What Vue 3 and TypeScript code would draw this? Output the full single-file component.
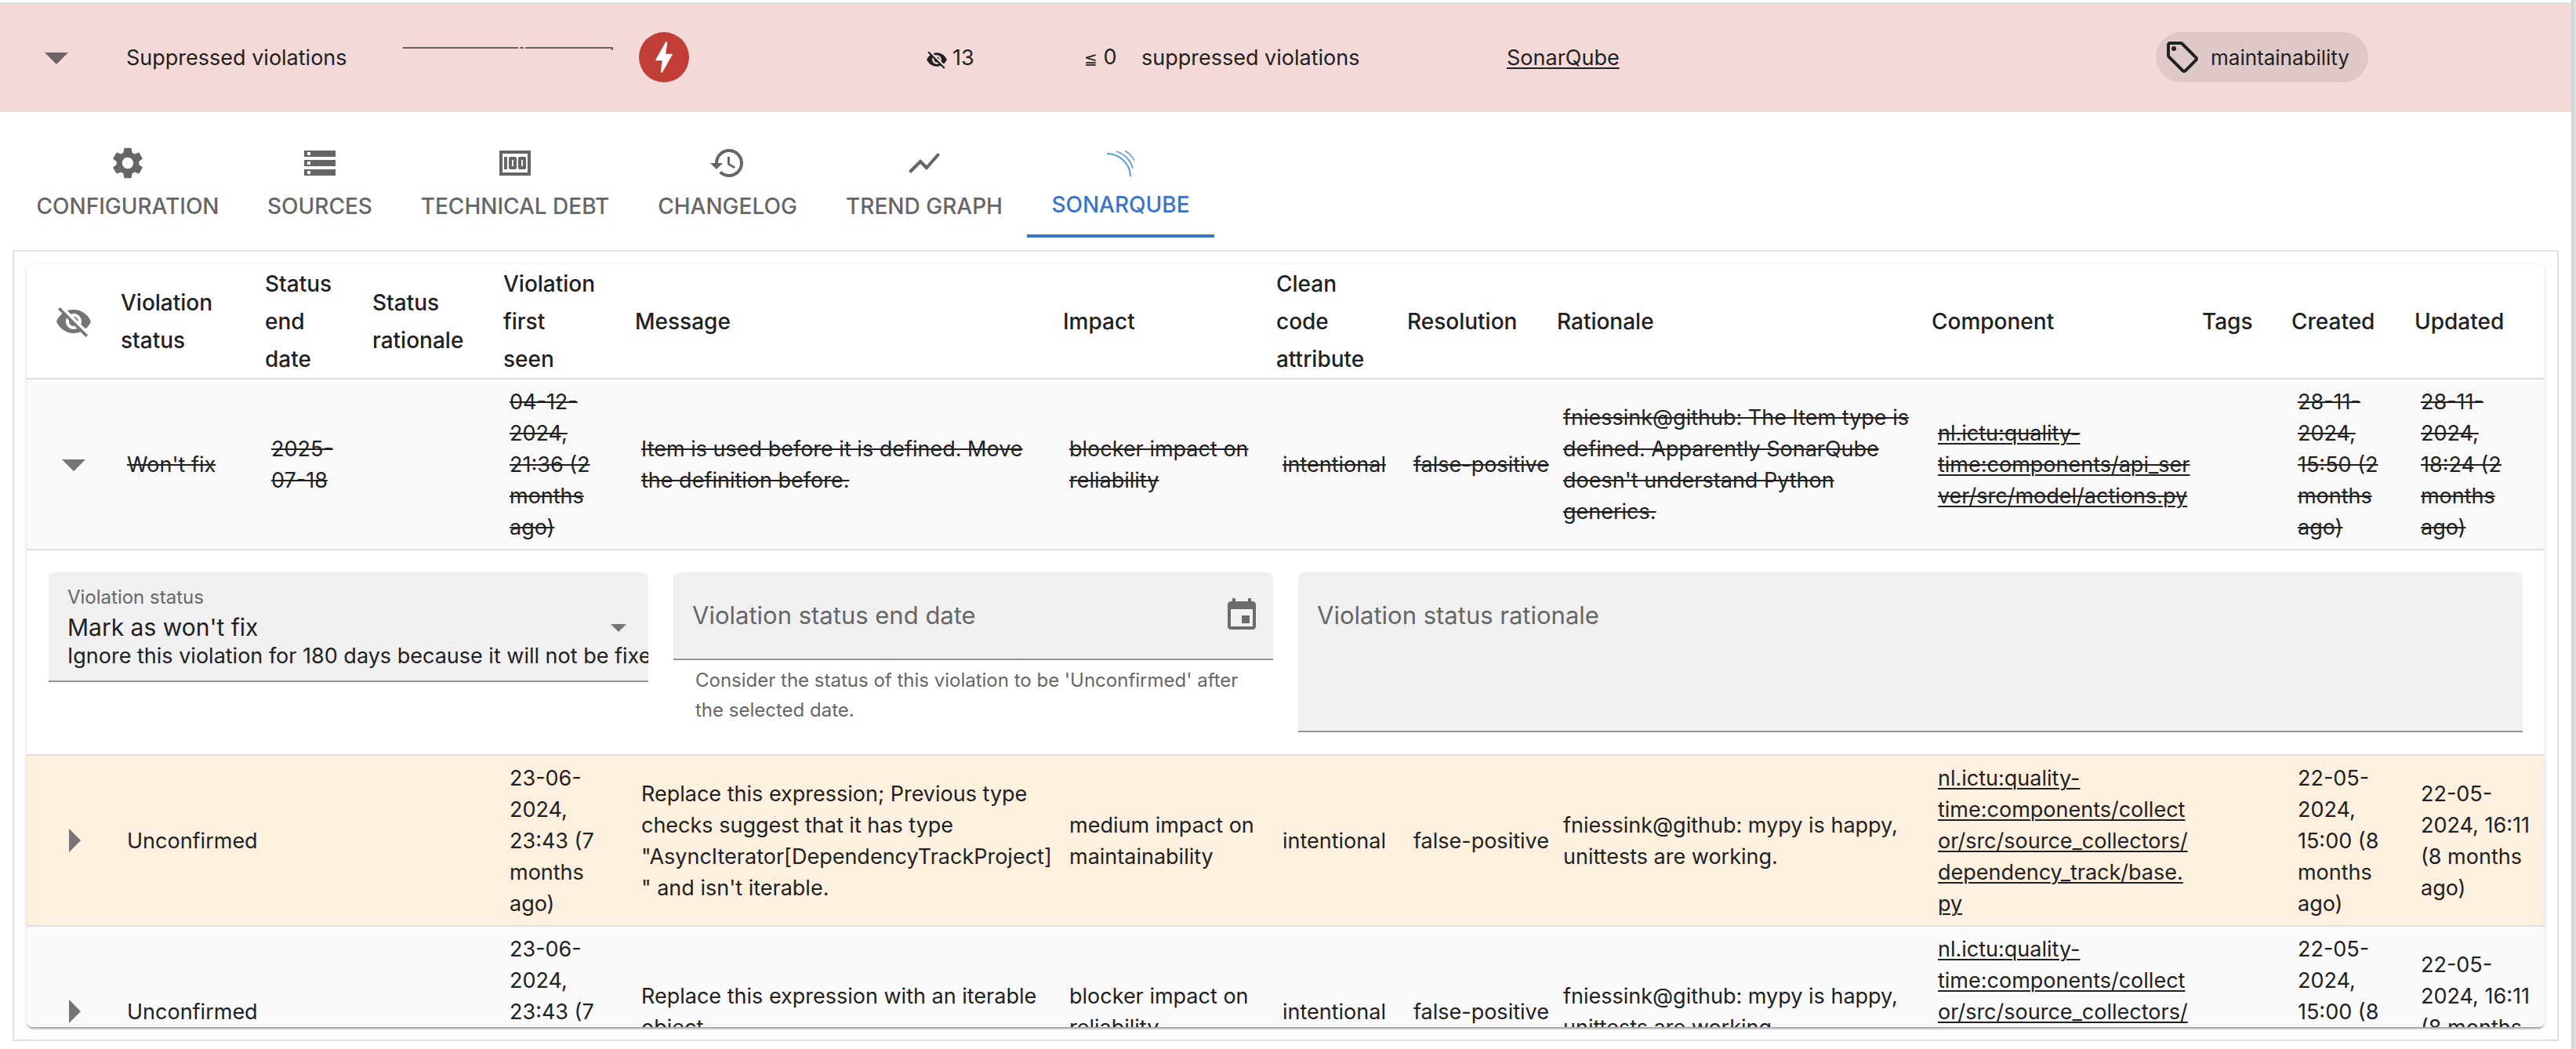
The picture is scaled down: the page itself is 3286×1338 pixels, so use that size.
<script setup lang="ts">
import { ref } from 'vue'

interface Tab {
  label: string
  width: number
  paths: string[]
}

interface Column {
  title: string
  weight: number
}

interface Violation {
  status: string
  endDate: string
  firstSeen: string
  message: string
  impact: string
  attribute: string
  resolution: string
  rationale: string
  component: string
  created: string
  updated: string
  ignored: boolean
  color: string
  expanded: boolean
}

const eyeOff =
  'M12 7c2.76 0 5 2.24 5 5 0 .65-.13 1.26-.36 1.83l2.92 2.92c1.51-1.26 2.7-2.89 3.43-4.75-1.73-4.39-6-7.5-11-7.5-1.4 0-2.74.25-3.98.7l2.16 2.16C10.74 7.13 11.35 7 12 7M2 4.27l2.28 2.28.46.46C3.08 8.3 1.78 10.02 1 12c1.73 4.39 6 7.5 11 7.5 1.55 0 3.03-.3 4.38-.84l.42.42L19.73 22 21 20.73 3.27 3zM7.53 9.8l1.55 1.55c-.05.21-.08.43-.08.65 0 1.66 1.34 3 3 3 .22 0 .44-.03.65-.08l1.55 1.55c-.67.33-1.41.53-2.2.53-2.76 0-5-2.24-5-5 0-.79.2-1.53.53-2.2m4.31-.78 3.15 3.15.02-.16c0-1.66-1.34-3-3-3z'

const activeTab = ref('Sonarqube')

const tabs: Tab[] = [
  {
    label: 'Configuration',
    width: 294,
    paths: [
      'M19.14 12.94c.04-.3.06-.61.06-.94 0-.32-.02-.64-.07-.94l2.03-1.58c.18-.14.23-.41.12-.61l-1.92-3.32c-.12-.22-.37-.29-.59-.22l-2.39.96c-.5-.38-1.03-.7-1.62-.94l-.36-2.54c-.04-.24-.24-.41-.48-.41h-3.84c-.24 0-.43.17-.47.41l-.36 2.54c-.59.24-1.13.57-1.62.94l-2.39-.96c-.22-.08-.47 0-.59.22L2.74 8.87c-.12.21-.08.47.12.61l2.03 1.58c-.05.3-.09.63-.09.94s.02.64.07.94l-2.03 1.58c-.18.14-.23.41-.12.61l1.92 3.32c.12.22.37.29.59.22l2.39-.96c.5.38 1.03.7 1.62.94l.36 2.54c.05.24.24.41.48.41h3.84c.24 0 .44-.17.47-.41l.36-2.54c.59-.24 1.13-.56 1.62-.94l2.39.96c.22.08.47 0 .59-.22l1.92-3.32c.12-.22.07-.47-.12-.61zM12 15.6c-1.98 0-3.6-1.62-3.6-3.6s1.62-3.6 3.6-3.6 3.6 1.62 3.6 3.6-1.62 3.6-3.6 3.6',
    ],
  },
  {
    label: 'Sources',
    width: 196,
    paths: ['M2 20h20v-4H2zm2-3h2v2H4zM2 4v4h20V4zm4 3H4V5h2zm-4 7h20v-4H2zm2-3h2v2H4z'],
  },
  {
    label: 'Technical debt',
    width: 302,
    paths: [
      'M5 8h2v8H5zm7 0H9c-.55 0-1 .45-1 1v6c0 .55.45 1 1 1h3c.55 0 1-.45 1-1V9c0-.55-.45-1-1-1m-1 6h-1v-4h1zm7-6h-3c-.55 0-1 .45-1 1v6c0 .55.45 1 1 1h3c.55 0 1-.45 1-1V9c0-.55-.45-1-1-1m-1 6h-1v-4h1z',
      'M2 4v16h20V4zm2 14V6h16v12z',
    ],
  },
  {
    label: 'Changelog',
    width: 240,
    paths: [
      'M13 3c-4.97 0-9 4.03-9 9H1l3.89 3.89.07.14L9 12H6c0-3.87 3.13-7 7-7s7 3.13 7 7-3.13 7-7 7c-1.93 0-3.68-.79-4.94-2.06l-1.42 1.42C8.27 19.99 10.51 21 13 21c4.97 0 9-4.03 9-9s-4.03-9-9-9m-1 5v5l4.28 2.54.72-1.21-3.5-2.08V8z',
    ],
  },
  {
    label: 'Trend graph',
    width: 262,
    paths: ['m3.5 18.49 6-6.01 4 4L22 6.92l-1.41-1.41-7.09 7.97-4-4L2 16.99z'],
  },
  { label: 'Sonarqube', width: 239, paths: [] },
]

const columns: Column[] = [
  { title: '', weight: 120 },
  { title: 'Violation\nstatus', weight: 184 },
  { title: 'Status\nend\ndate', weight: 137 },
  { title: 'Status\nrationale', weight: 167 },
  { title: 'Violation\nfirst\nseen', weight: 168 },
  { title: 'Message', weight: 546 },
  { title: 'Impact', weight: 272 },
  { title: 'Clean\ncode\nattribute', weight: 167 },
  { title: 'Resolution', weight: 191 },
  { title: 'Rationale', weight: 478 },
  { title: 'Component', weight: 345 },
  { title: 'Tags', weight: 114 },
  { title: 'Created', weight: 157 },
  { title: 'Updated', weight: 166 },
]
const totalWeight = columns.reduce((sum, column) => sum + column.weight, 0)
const columnWidth = (column: Column) => `${(column.weight / totalWeight) * 100}%`

const violations = ref<Violation[]>([
  {
    status: "Won't fix",
    endDate: '2025-\n07-18',
    firstSeen: '04-12-\n2024,\n21:36 (2\nmonths\nago)',
    message: 'Item is used before it is defined. Move\nthe definition before.',
    impact: 'blocker impact on\nreliability',
    attribute: 'intentional',
    resolution: 'false-positive',
    rationale:
      "fniessink@github: The Item type is\ndefined. Apparently SonarQube\ndoesn't understand Python\ngenerics.",
    component: 'nl.ictu:quality-\ntime:components/api_ser\nver/src/model/actions.py',
    created: '28-11-\n2024,\n15:50 (2\nmonths\nago)',
    updated: '28-11-\n2024,\n18:24 (2\nmonths\nago)',
    ignored: true,
    color: 'grey',
    expanded: true,
  },
  {
    status: 'Unconfirmed',
    endDate: '',
    firstSeen: '23-06-\n2024,\n23:43 (7\nmonths\nago)',
    message:
      'Replace this expression; Previous type\nchecks suggest that it has type\n"AsyncIterator[DependencyTrackProject]\n" and isn\'t iterable.',
    impact: 'medium impact on\nmaintainability',
    attribute: 'intentional',
    resolution: 'false-positive',
    rationale: 'fniessink@github: mypy is happy,\nunittests are working.',
    component:
      'nl.ictu:quality-\ntime:components/collect\nor/src/source_collectors/\ndependency_track/base.\npy',
    created: '22-05-\n2024,\n15:00 (8\nmonths\nago)',
    updated: '22-05-\n2024, 16:11\n(8 months\nago)',
    ignored: false,
    color: 'yellow',
    expanded: false,
  },
  {
    status: 'Unconfirmed',
    endDate: '',
    firstSeen: '23-06-\n2024,\n23:43 (7\nmonths\nago)',
    message: 'Replace this expression with an iterable\nobject.',
    impact: 'blocker impact on\nreliability',
    attribute: 'intentional',
    resolution: 'false-positive',
    rationale: 'fniessink@github: mypy is happy,\nunittests are working.',
    component:
      'nl.ictu:quality-\ntime:components/collect\nor/src/source_collectors/\ndependency_track/base.\npy',
    created: '22-05-\n2024,\n15:00 (8\nmonths\nago)',
    updated: '22-05-\n2024, 16:11\n(8 months\nago)',
    ignored: false,
    color: 'grey',
    expanded: false,
  },
])
</script>

<template>
  <div class="page">
    <main class="content">
      <section class="metric">
        <button class="expander metric-expander" type="button" aria-label="Collapse metric">
          <svg viewBox="0 0 24 24"><path d="M7 10l5 5 5-5z" /></svg>
        </button>
        <span>Suppressed violations</span>
        <svg class="sparkline" viewBox="0 0 268 8" aria-hidden="true">
          <path d="M0 1h147M149 1h5M156 1h112M267 0v4" />
        </svg>
        <span class="status-badge">
          <svg viewBox="0 0 24 24">
            <path
              d="M11 21h-1l1-7H7.500c-.58 0-.57-.32-.38-.66s.05-.08.07-.12C8.480 10.940 10.420 7.540 13 3h1l-1 7h3.500c.49 0 .56.33.47.51l-.07.15C12.960 17.550 11 21 11 21"
            />
          </svg>
        </span>
        <span class="measurement">
          <svg viewBox="0 0 24 24"><path :d="eyeOff" /></svg>
          <span>13</span>
        </span>
        <span class="target"><span class="operator">≦</span> 0</span>
        <span>suppressed violations</span>
        <span><a href="#sonarqube">SonarQube</a></span>
        <span class="chip">
          <svg viewBox="0 0 24 24">
            <path
              d="m21.410 11.580-9-9C12.050 2.220 11.550 2 11 2H4c-1.100 0-2 .9-2 2v7c0 .55.22 1.050.59 1.420l9 9c.36.36.86.58 1.410.58s1.050-.22 1.410-.59l7-7c.37-.36.59-.86.59-1.410s-.23-1.060-.59-1.420M13 20.010 4 11V4h7v-.01l9 9z"
            />
            <circle cx="6.500" cy="6.500" r="1.500" />
          </svg>
          <span>maintainability</span>
        </span>
      </section>

      <nav class="tabs" role="tablist">
        <button
          v-for="tab in tabs"
          :key="tab.label"
          class="tab"
          :class="{ selected: tab.label === activeTab }"
          :style="{ width: tab.width + 'px' }"
          type="button"
          role="tab"
          :aria-selected="tab.label === activeTab"
          @click="activeTab = tab.label"
        >
          <svg v-if="tab.paths.length" class="tab-icon" viewBox="0 0 24 24">
            <path v-for="path in tab.paths" :key="path" :d="path" />
          </svg>
          <svg v-else class="source-logo" viewBox="0 0 44 44">
            <path stroke-width="2" d="M4 10C20 10 34 23 34 39" />
            <path stroke-width="1.700" d="M16 7C26 10 34 18 37 28.500" />
            <path stroke-width="1.400" d="M27 6.500C32 9 36.500 14 39 19" />
          </svg>
          <span>{{ tab.label }}</span>
        </button>
      </nav>

      <section id="sonarqube" class="panel">
        <div class="paper">
          <table>
            <colgroup>
              <col v-for="(column, i) in columns" :key="i" :style="{ width: columnWidth(column) }" />
            </colgroup>
            <thead>
              <tr>
                <th v-for="(column, i) in columns" :key="i" scope="col">
                  <button v-if="i === 0" class="hide-ignored" type="button" aria-label="Hide ignored violations">
                    <svg viewBox="0 0 24 24"><path :d="eyeOff" /></svg>
                  </button>
                  <template v-else>{{ column.title }}</template>
                </th>
              </tr>
            </thead>
            <tbody>
              <template v-for="(item, i) in violations" :key="i">
                <tr :class="[item.color, { ignored: item.ignored }]">
                  <td class="expand-cell">
                    <button
                      class="expander"
                      :class="{ closed: !item.expanded }"
                      type="button"
                      aria-label="Toggle details"
                      @click="item.expanded = !item.expanded"
                    >
                      <svg viewBox="0 0 24 24"><path d="M7 10l5 5 5-5z" /></svg>
                    </button>
                  </td>
                  <td>{{ item.status }}</td>
                  <td>{{ item.endDate }}</td>
                  <td></td>
                  <td>{{ item.firstSeen }}</td>
                  <td>{{ item.message }}</td>
                  <td>{{ item.impact }}</td>
                  <td>{{ item.attribute }}</td>
                  <td>{{ item.resolution }}</td>
                  <td>{{ item.rationale }}</td>
                  <td><a href="#sonarqube">{{ item.component }}</a></td>
                  <td></td>
                  <td>{{ item.created }}</td>
                  <td>{{ item.updated }}</td>
                </tr>
                <tr v-if="item.expanded">
                  <td class="details" colspan="14">
                    <div class="form">
                      <div class="field status-field">
                        <label :for="`status-${i}`">Violation status</label>
                        <select :id="`status-${i}`">
                          <option>Mark as won't fix</option>
                          <option>Unconfirm</option>
                          <option>Confirm</option>
                        </select>
                        <span class="description">Ignore this violation for 180 days because it will not be fixed.</span>
                        <svg class="select-arrow" viewBox="0 0 24 24"><path d="M7 10l5 5 5-5z" /></svg>
                      </div>
                      <div>
                        <div class="field date-field">
                          <label class="floating" :for="`date-${i}`">Violation status end date</label>
                          <input :id="`date-${i}`" type="text" />
                          <button class="calendar" type="button" aria-label="Choose date">
                            <svg viewBox="0 0 24 24">
                              <path
                                d="M17 12h-5v5h5zM16 1v2H8V1H6v2H5c-1.110 0-1.990.9-1.990 2L3 19c0 1.100.89 2 2 2h14c1.100 0 2-.9 2-2V5c0-1.100-.9-2-2-2h-1V1zm3 18H5V8h14z"
                              />
                            </svg>
                          </button>
                        </div>
                        <p class="helper">
                          Consider the status of this violation to be 'Unconfirmed' after<br />the selected date.
                        </p>
                      </div>
                      <div class="field rationale-field">
                        <label class="floating" :for="`rationale-${i}`">Violation status rationale</label>
                        <textarea :id="`rationale-${i}`"></textarea>
                      </div>
                    </div>
                  </td>
                </tr>
              </template>
            </tbody>
          </table>
        </div>
      </section>
    </main>
    <div class="edge"></div>
  </div>
</template>

<style>
body {
  margin: 0;
  background: #fff;
}
</style>

<style scoped>
* {
  box-sizing: border-box;
}

.page {
  display: flex;
  height: 100vh;
  font-family: Inter, 'Liberation Sans', sans-serif;
  font-size: 27px;
  line-height: 40px;
  color: #212121;
}

.content {
  flex: 1;
  min-width: 0;
  display: flex;
  flex-direction: column;
  padding: 3px 0 10px;
}

.edge {
  width: 6px;
  background: linear-gradient(to right, #cfcfcf, #e4e4e4);
}

svg {
  display: block;
  fill: currentColor;
}

a {
  color: inherit;
  text-decoration: underline;
  text-decoration-thickness: 2px;
  text-underline-offset: 3px;
}

button {
  font: inherit;
  color: inherit;
  border: 0;
  padding: 0;
  background: none;
  cursor: pointer;
}

/* Metric summary */
.metric {
  display: grid;
  grid-template-columns: 161fr 353fr 301fr 366fr 202fr 73fr 466fr 828fr 530fr;
  align-items: center;
  height: 140px;
  background: #f4d9d9;
  border-top: 2px solid #e0e0e0;
  border-bottom: 2px solid #e0e0e0;
  white-space: nowrap;
}

.metric span:not(:has(svg)) {
  padding-top: 2px;
}

.expander {
  display: block;
  color: #757575;
}

.expander svg {
  width: 72px;
  height: 72px;
}

.expander.closed svg {
  transform: rotate(-90deg);
}

.metric-expander {
  margin-left: 36px;
  color: #6f6363;
}

.sparkline {
  width: 268px;
  height: 8px;
  margin-bottom: 18px;
  fill: none;
  stroke: #6b5f5f;
  stroke-width: 2;
}

.status-badge {
  display: flex;
  align-items: center;
  justify-content: center;
  width: 64px;
  height: 64px;
  border-radius: 50%;
  background: #c13e36;
  color: #fff;
}

.status-badge svg {
  width: 52px;
  height: 52px;
}

.measurement {
  display: flex;
  align-items: center;
  gap: 6px;
}

.measurement svg {
  width: 28px;
  height: 28px;
  margin-top: 6px;
}

.operator {
  font-size: 20px;
}

.chip {
  display: flex;
  align-items: center;
  justify-self: start;
  gap: 12px;
  height: 64px;
  padding: 0 24px 0 10px;
  border-radius: 32px;
  background: #dfc8c8;
  font-size: 26px;
}

.chip svg {
  width: 48px;
  height: 48px;
}

/* Tabs */
.tabs {
  display: flex;
  margin: 16px 16px 0;
}

.tab {
  display: flex;
  flex-direction: column;
  align-items: center;
  justify-content: center;
  gap: 14px;
  height: 144px;
  padding-top: 2px;
  font-size: 28px;
  line-height: 35px;
  font-weight: 500;
  text-transform: uppercase;
  white-space: nowrap;
  color: #666;
}

.tab.selected {
  color: #3874cb;
  box-shadow: inset 0 -4px #3874cb;
}

.tab-icon {
  width: 48px;
  height: 48px;
}

.source-logo {
  width: 44px;
  height: 44px;
  fill: none;
  stroke: #549dd3;
}

/* Violations table */
.panel {
  flex: 1;
  min-height: 0;
  display: flex;
  margin: 16px 16px 0;
  padding: 16px;
  border: 2px solid #e0e0e0;
}

.paper {
  flex: 1;
  overflow: hidden;
  border-radius: 8px;
  box-shadow:
    0 4px 2px -2px rgba(0, 0, 0, 0.2),
    0 2px 2px rgba(0, 0, 0, 0.14),
    0 2px 6px rgba(0, 0, 0, 0.12);
}

table {
  width: 100%;
  table-layout: fixed;
  border-collapse: separate;
  border-spacing: 0;
}

th,
td {
  padding: 9px 0 7px 8px;
  border-bottom: 2px solid #e0e0e0;
  text-align: left;
  vertical-align: middle;
  white-space: pre;
}

th {
  height: 147px;
  padding: 1px 0 0;
  font-size: 28px;
  font-weight: 500;
  line-height: 48px;
}

.hide-ignored {
  display: block;
  margin: 0 auto;
  color: #757575;
}

.hide-ignored svg {
  width: 48px;
  height: 48px;
}

.grey {
  background: #f9f9f9;
}

.yellow {
  background: #fdf0df;
}

.ignored td {
  text-decoration: line-through 2px;
}

.expand-cell {
  padding: 8px 0;
}

.expand-cell .expander {
  margin: 0 auto;
}

/* Violation details */
.details {
  padding: 28px;
  white-space: normal;
}

.form {
  display: grid;
  grid-template-columns: repeat(4, minmax(0, 1fr));
  gap: 32px;
  align-items: start;
}

.field {
  position: relative;
  overflow: hidden;
  background: #f0f0f0;
  border-bottom: 2px solid #949494;
  border-radius: 8px 8px 0 0;
}

.field label {
  display: block;
  color: #666;
}

.status-field {
  height: 140px;
  padding: 14px 0 0 24px;
  white-space: nowrap;
}

.status-field label {
  font-size: 24px;
  line-height: 36px;
}

select,
input,
textarea {
  display: block;
  width: 100%;
  margin: 0;
  padding: 0;
  border: 0;
  outline: 0;
  background: none;
  color: inherit;
  font: inherit;
  font-size: 30px;
}

select {
  height: 40px;
  line-height: 40px;
  appearance: none;
}

.description {
  display: block;
  line-height: 34px;
}

.select-arrow {
  position: absolute;
  top: 46px;
  right: 14px;
  width: 48px;
  height: 48px;
  color: #757575;
}

.field .floating {
  position: absolute;
  top: 32px;
  left: 24px;
  font-size: 31px;
  line-height: 46px;
  pointer-events: none;
}

.date-field {
  display: flex;
  align-items: center;
  height: 112px;
  padding: 0 16px 0 24px;
}

.date-field input {
  flex: 1;
  height: 46px;
}

.calendar {
  color: #6b6b6b;
}

.calendar svg {
  width: 48px;
  height: 48px;
}

.helper {
  margin: 7px 28px 0;
  color: #666;
  font-size: 24px;
  line-height: 38px;
  white-space: nowrap;
}

.rationale-field {
  grid-column: span 2;
  height: 204px;
  padding: 32px 24px 16px;
}

textarea {
  height: 100%;
  resize: none;
}
</style>
